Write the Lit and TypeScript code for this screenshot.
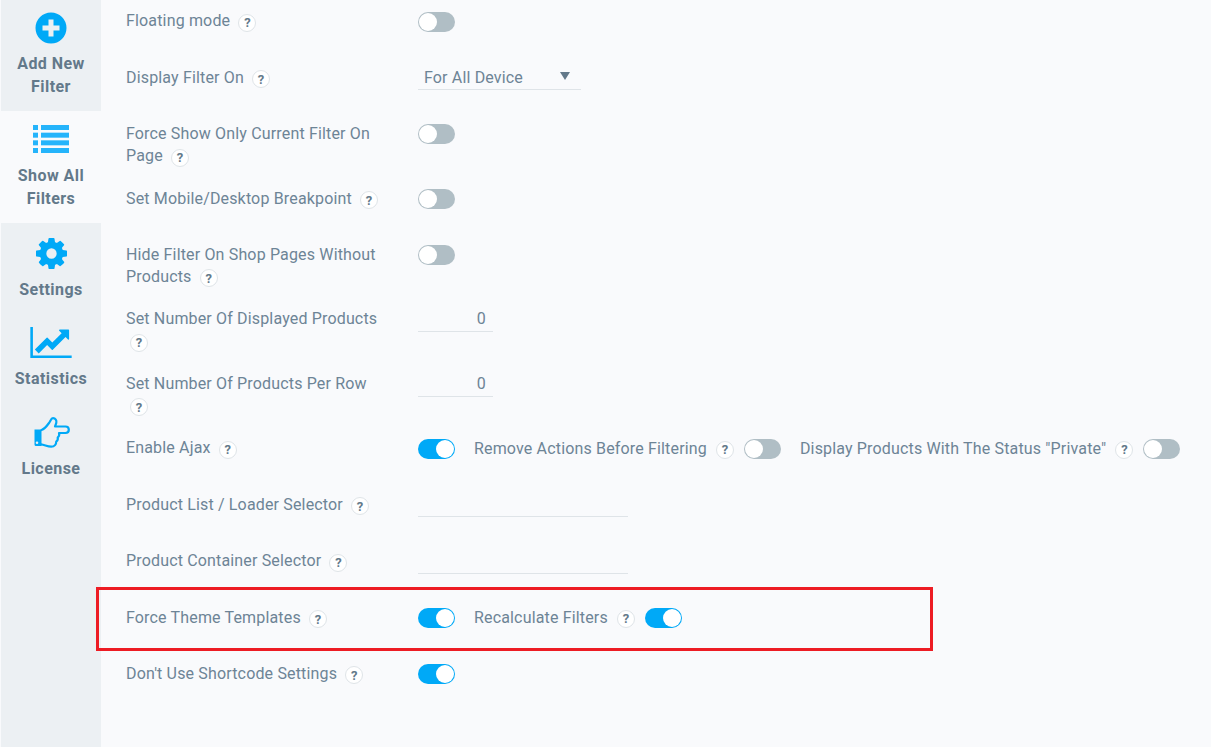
import { LitElement, html, css, svg } from "lit";
import { customElement } from "lit/decorators.js";

const gear = svg`<path d="M1024 768q0-106-75-181t-181-75-181 75-75 181 75 181 181 75 181-75 75-181zm512-109v222q0 12-8 23t-20 13l-185 28q-19 54-39 91 35 50 107 138 10 12 10 25t-9 23q-27 37-99 108t-94 71q-12 0-26-9l-138-108q-44 23-91 38-16 136-29 186-7 28-36 28h-222q-14 0-24.500-8.500t-11.500-21.500l-28-184q-49-16-90-37l-141 107q-10 9-25 9-14 0-25-11-126-114-165-168-7-10-7-23 0-12 8-23 15-21 51-66.500t54-70.500q-27-50-41-99l-183-27q-13-2-21-12.500t-8-23.500v-222q0-12 8-23t19-13l186-28q14-46 39-92-40-57-107-138-10-12-10-24 0-10 9-23 26-36 98.500-107.500t94.500-71.500q13 0 26 10l138 107q44-23 91-38 16-136 29-186 7-28 36-28h222q14 0 24.500 8.500t11.500 21.500l28 184q49 16 90 37l142-107q9-9 24-9 13 0 25 10 129 119 165 170 7 8 7 22 0 12-8 23-15 21-51 66.500t-54 70.500q26 50 41 98l183 28q13 2 21 12.500t8 23.500z"/>`;
const chart = svg`<path d="M2048 1408v128h-2048v-1536h128v1408h1920zm-128-1248v435q0 21-19.500 29.500t-35.500-7.500l-121-121-633 633q-10 10-23 10t-23-10l-233-233-416 416-192-192 585-585q10-10 23-10t23 10l233 233 464-464-121-121q-16-16-7.500-35.500t29.500-19.500h435q14 0 23 9t9 23z"/>`;

type Cell = { t: "toggle"; on: boolean } | { t: "text"; label: string } | { t: "select" } | { t: "num" } | { t: "line" };
type Row = { label: string; cells: Cell[] };
const on = (v: boolean): Cell => ({ t: "toggle", on: v });
const rows: Row[] = [
  { label: "Floating mode", cells: [on(false)] },
  { label: "Display Filter On", cells: [{ t: "select" }] },
  { label: "Force Show Only Current Filter On Page", cells: [on(false)] },
  { label: "Set Mobile/Desktop Breakpoint", cells: [on(false)] },
  { label: "Hide Filter On Shop Pages Without Products", cells: [on(false)] },
  { label: "Set Number Of Displayed Products", cells: [{ t: "num" }] },
  { label: "Set Number Of Products Per Row", cells: [{ t: "num" }] },
  { label: "Enable Ajax", cells: [on(true), { t: "text", label: "Remove Actions Before Filtering" }, on(false), { t: "text", label: 'Display Products With The Status "Private"' }, on(false)] },
  { label: "Product List / Loader Selector", cells: [{ t: "line" }] },
  { label: "Product Container Selector", cells: [{ t: "line" }] },
  { label: "Force Theme Templates", cells: [on(true), { t: "text", label: "Recalculate Filters" }, on(true)] },
  { label: "Don't Use Shortcode Settings", cells: [on(true)] },
];

@customElement("app-root")
export class AppRoot extends LitElement {
  static styles = css`
    :host { display: block; position: relative; width: 1211px; height: 747px; overflow: hidden; background: #f9fafc; font-family: Roboto, "Liberation Sans", sans-serif; font-size: 16px; letter-spacing: 0.16px; color: #6d8496; }
    .page { display: flex; height: 747px; }
    .side { width: 100px; margin-left: 1px; background: #ecf0f3; flex: none; }
    .item { display: flex; flex-direction: column; align-items: center; font-weight: 700; letter-spacing: 0.45px; color: #63798a; line-height: 22.4px; text-align: center; padding-top: 10px; height: 111px; box-sizing: border-box; }
    .item.active { background: #f9fafc; height: 112px; }
    .item.small { height: 89.5px; padding-top: 12.5px; line-height: 22px; }
    .ic { flex: none; height: 36px; display: flex; align-items: center; justify-content: center; margin-bottom: 7.4px; }
    .active .ic { margin-bottom: 8.4px; }
    .small .ic { margin-bottom: 7px; }
    .ic svg { display: block; fill: #00a9f7; }
    .ic svg.list { fill: #25b4fb; }
    .ic svg.up { margin-top: -1px; }
    .main { flex: 1; padding-left: 25px; }
    .row { display: flex; min-height: 56.4px; box-sizing: border-box; }
    .label { width: 292px; flex: none; padding: 10.3px 35px 10.2px 0; box-sizing: border-box; line-height: 22px; }
    .help { display: inline-flex; width: 18px; height: 18px; border: 1px solid #dfe4e8; background: #fff; border-radius: 50%; box-sizing: border-box; align-items: center; justify-content: center; font-size: 13px; letter-spacing: 0; font-weight: 700; color: #63798a; margin: -4px 0 -4px 4px; vertical-align: -1px; line-height: 1; }
    .value { display: flex; align-items: flex-start; padding-top: 11.6px; }
    .toggle { width: 37px; height: 20px; border-radius: 10px; background: #b0bec5; position: relative; flex: none; margin-right: 19px; }
    .toggle::after { content: ""; position: absolute; left: 1px; top: 1px; width: 18px; height: 18px; border-radius: 50%; background: #fff; }
    .toggle.on { background: #00a9f7; }
    .toggle.on::after { left: 18px; }
    .inl { line-height: 22px; margin-top: -1px; margin-right: 10px; white-space: nowrap; display: flex; }
    .inl .help { margin: 3px 0 0 9px; }
    .select { width: 163px; height: 26px; margin-top: -4px; border-bottom: 1px solid #dfe4e8; padding: 3px 6px 0; box-sizing: border-box; display: flex; justify-content: space-between; align-items: center; line-height: 22px; }
    .arrow { width: 0; height: 0; border-left: 5px solid transparent; border-right: 5px solid transparent; border-top: 8px solid #63798a; margin-right: 5px; margin-top: -4px; }
    .num { width: 75px; height: 26px; margin-top: -3.6px; border-bottom: 1px solid #dfe4e8; padding-right: 7px; box-sizing: border-box; text-align: right; line-height: 26px; }
    .line { width: 210px; height: 22.4px; border-bottom: 1px solid #dfe4e8; box-sizing: border-box; }
    .mark { position: absolute; left: 96px; top: 587px; width: 837px; height: 64px; border: 3px solid #ed1c24; box-sizing: border-box; pointer-events: none; }
  `;

  private cell(c: Cell) {
    if (c.t === "toggle") return html`<div class="toggle ${c.on ? "on" : ""}"></div>`;
    if (c.t === "text") return html`<div class="inl">${c.label}<span class="help">?</span></div>`;
    if (c.t === "select") return html`<div class="select">For All Device<span class="arrow"></span></div>`;
    if (c.t === "num") return html`<div class="num">0</div>`;
    return html`<div class="line"></div>`;
  }

  render() {
    return html`<div class="page">
      <nav class="side">
        <div class="item">
          <div class="ic"><svg width="32" height="32" viewBox="0 0 32 32"><path fill-rule="evenodd" d="M16 .5a15.500 15.500 0 1 0 0 31a15.500 15.500 0 1 0 0-31zM13.500 7.500h5v6h6v5h-6v6h-5v-6h-6v-5h6z"/></svg></div>
          Add New<br />Filter
        </div>
        <div class="item active">
          <div class="ic"><svg class="list" width="36" height="28" viewBox="0 0 36 28"><rect x="0" y="0" width="5" height="5"/><rect x="8" y="0" width="28" height="5"/><rect x="0" y="7.670" width="5" height="5"/><rect x="8" y="7.670" width="28" height="5"/><rect x="0" y="15.330" width="5" height="5"/><rect x="8" y="15.330" width="28" height="5"/><rect x="0" y="23" width="5" height="5"/><rect x="8" y="23" width="28" height="5"/></svg></div>
          Show All<br />Filters
        </div>
        <div class="item small">
          <div class="ic"><svg width="31" height="31" viewBox="0 0 1536 1536">${gear}</svg></div>
          Settings
        </div>
        <div class="item small">
          <div class="ic"><svg class="up" width="42" height="31" viewBox="0 0 2048 1536">${chart}</svg></div>
          Statistics
        </div>
        <div class="item small">
          <div class="ic"><svg width="37" height="32" viewBox="0 0 37 32"><path fill-rule="evenodd" d="M1.500 12.500H8.500V29H3a1.500 1.500 0 0 1-1.500-1.500zM4 24.500a1.300 1.300 0 1 0 0 2.600a1.300 1.300 0 1 0 0-2.600z"/><path fill="none" stroke="#00a9f7" stroke-width="2.200" stroke-linejoin="round" stroke-linecap="round" d="M8.500 13c3-1 5-3.500 7.500-7c1.500-2 2-4.800 4-4.800c2.500 0 3.800 2.200 3.300 4.500c-.3 1.500-1 2.500-1.300 3.800h10.500c2 0 3.300 1.500 3.300 3.300c0 2-1.500 3.200-3.300 3.200h-6.500c.8 2-.2 3.500-1.300 4.500c.5 2-.3 3.300-1.500 4.200c.1 2.500-1.500 5-5 5c-3.700 0-6.500-1.800-10.200-2.300"/></svg></div>
          License
        </div>
      </nav>
      <main class="main">
        ${rows.map((r) => html`<div class="row">
          <div class="label">${r.label} <span class="help">?</span></div>
          <div class="value">${r.cells.map((c) => this.cell(c))}</div>
        </div>`)}
      </main>
    </div>
    <div class="mark"></div>`;
  }
}
